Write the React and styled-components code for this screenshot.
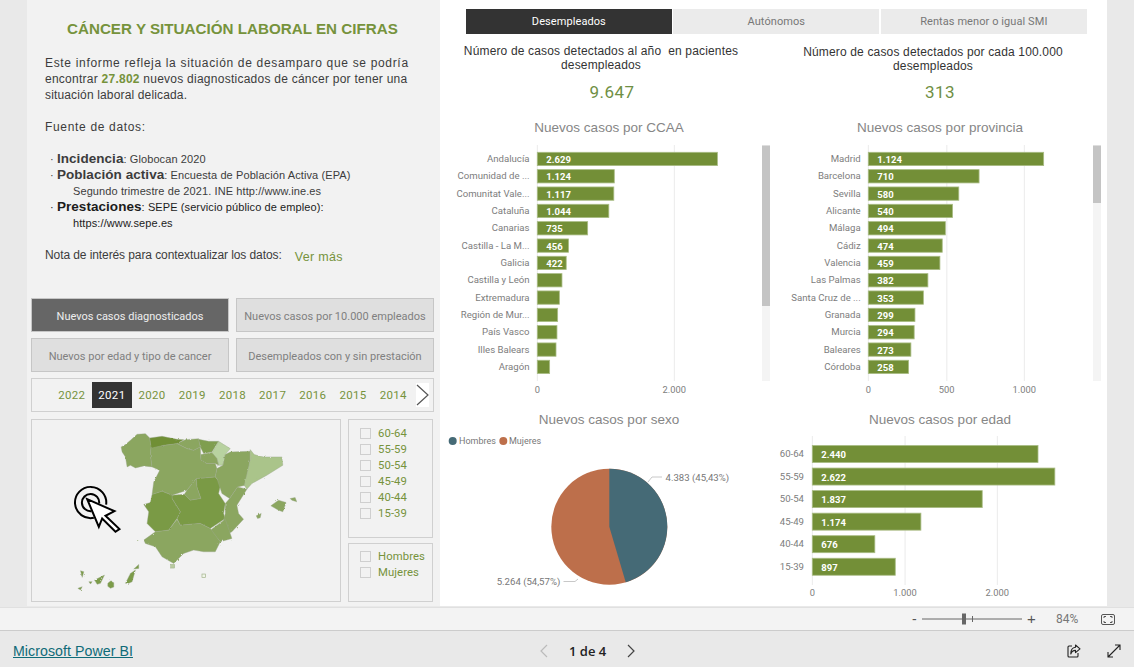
import React from 'react';
import styled, { createGlobalStyle } from 'styled-components';

const GREEN = '#76933c';
const Global = createGlobalStyle`
  html, body { margin: 0; padding: 0; width: 1134px; height: 667px; overflow: hidden; background: #e9e9e9; }
  * { box-sizing: border-box; }
  #root { font-family: "Liberation Sans", Arial, sans-serif; }
`;
const Page = styled.div`display: flex; flex-direction: column; width: 1134px; height: 667px;`;
const Main = styled.main`display: flex; height: 607px; padding: 0 27px;`;
const LeftPanel = styled.section`width: 413px; height: 606px; background: #f2f2f2; padding: 19px 0 0 4px;`;
const RightPanel = styled.section`width: 667px; height: 606px; background: #fff; padding-top: 9px;`;

const Title = styled.h1`margin: 0 0 0 36px; font-size: 15.2px; line-height: 20px; font-weight: 700; color: ${GREEN}; white-space: nowrap;`;
const Copy = styled.div`margin: 16px 0 0 14px; font-size: 12px; line-height: 16px; color: #3c3c3c; white-space: nowrap;`;
const Line = styled.div`letter-spacing: ${p => p.$sp}px; margin-bottom: ${p => p.$gap || 0}px;`;
const Green = styled.b`color: ${GREEN};`;
const Sources = styled.div`margin: 0 0 16px 5px; `;
const SourceLine = styled.div`font-size: 11px; letter-spacing: .1px; color: ${p => p.$dark ? '#1c1c1c' : '#3c3c3c'}; padding-left: ${p => p.$sub ? '23px' : '0'};`;
const SourceName = styled.b`font-size: 13.5px; letter-spacing: .05px;`;
const Note = styled.div`display: flex; align-items: baseline; font-size: 12px; letter-spacing: -.09px; color: #3c3c3c;`;
const More = styled.span`margin-left: 13px; font-size: 12.5px; letter-spacing: .35px; color: ${GREEN}; position: relative; top: 2px;`;

const Buttons = styled.div`display: grid; grid-template-columns: 198px 198px; grid-auto-rows: 34px; gap: 6px 7px; margin-top: 35px;`;
const NavButton = styled.div`
  display: flex; align-items: center; justify-content: center; border: 1px solid #c6c6c6;
  background: ${p => p.$active ? '#666' : '#dfdfdf'}; color: ${p => p.$active ? '#eee' : '#808080'};
  font-family: Roboto, sans-serif; font-size: 11px; white-space: nowrap; padding-top: 2px;
`;
const YearBar = styled.div`display: flex; align-items: center; width: 403px; height: 34px; margin-top: 6px; border: 1px solid #d0d0d0; padding-left: 19.6px; `;
const Year = styled.div`
  width: 40.2px; height: 26px; display: flex; align-items: center; justify-content: center;
  font-family: Roboto, sans-serif; font-size: 11.5px; letter-spacing: .3px;
  background: ${p => p.$active ? '#333' : 'transparent'}; color: ${p => p.$active ? '#fff' : GREEN};
`;
const NextYear = styled.svg`display: block; margin-left: 3px; background: #fff;`;
const FilterRow = styled.div`display: flex; gap: 7px; margin-top: 7px;`;
const MapBox = styled.div`width: 310px; height: 183px; border: 1px solid #d0d0d0;`;
const MapSvg = styled.svg`display: block; width: 308px; height: 181px;`;
const Slicers = styled.div`display: flex; flex-direction: column; gap: 5px; width: 85px;`;
const SlicerBox = styled.div`height: ${p => p.$h}px; border: 1px solid #d0d0d0; padding: ${p => p.$top}px 0 0 11px;`;
const Option = styled.div`display: flex; align-items: center; height: 16px; gap: 7px; font-family: Roboto, sans-serif; font-size: 11.3px; letter-spacing: .1px; color: ${GREEN};`;
const Check = styled.span`display: block; width: 11px; height: 11px; border: 1px solid #cfcfcf; `;

const Tabs = styled.div`display: grid; grid-template-columns: repeat(3, 205.7px); gap: 1.8px; margin-left: 26px; height: 24.5px;`;
const Tab = styled.div`
  display: flex; align-items: center; justify-content: center; font-family: Roboto, sans-serif; font-size: 11px; letter-spacing: .08px;
  background: ${p => p.$active ? '#333' : '#ebebeb'}; color: ${p => p.$active ? '#fff' : '#777'};
`;
const Columns = styled.div`display: grid; grid-template-columns: 330px 337px; margin-top: -.5px;`;
const Column = styled.div`display: flex; flex-direction: column;`;
const Kpi = styled.div`height: 71px; padding-top: ${p => p.$top}px;`;
const KpiCaption = styled.div`width: ${p => p.$w}px; height: 28px; text-align: center; font-size: 12px; line-height: 14px; letter-spacing: .16px; color: #333; white-space: pre-wrap;`;
const KpiValue = styled.div`width: ${p => p.$w}px; margin-top: ${p => p.$top}px; text-align: center; font-family: Roboto, sans-serif; font-size: 17px; line-height: 24px; font-weight: 400; letter-spacing: .5px; color: #6f8f44;`;
const ChartTitle = styled.h2`
  margin: ${p => p.$top}px 0 0; width: ${p => p.$w}px; height: 20px; text-align: center; font-size: 13.5px; line-height: 22px; font-weight: 400; color: #868686;
`;
const ChartSvg = styled.svg`
  display: block; flex: none;
  text { font-family: Roboto, sans-serif; }
`;

const ZoomBar = styled.div`display: flex; align-items: center; height: 23px; background: #f3f3f3; border-top: 1px solid #e0e0e0; padding-left: 912px;`;
const ZoomSign = styled.span`font-family: "Liberation Sans", sans-serif; font-size: ${p => p.$s}px; color: #555; width: ${p => p.$w}px; line-height: 20px; margin-left: ${p => p.$left || 0}px;`;
const ZoomPct = styled.span`font-family: Roboto, sans-serif; font-size: 12px; color: #777; margin-left: 18px; width: 45px;`;
const Footer = styled.footer`display: flex; align-items: center; height: 37px; background: #e9e9e9; border-top: 1px solid #ccc; padding: 3px 13px 0 13px;`;
const BrandLink = styled.a`width: 526px; font-size: 14.2px; color: #0f6b78; text-decoration: underline; letter-spacing: .05px; white-space: nowrap;`;
const Pager = styled.div`display: flex; align-items: center; gap: 20px; font-family: "Open Sans", sans-serif; font-size: 13px; font-weight: 600; color: #222;`;
const Actions = styled.div`display: flex; align-items: center; gap: 26px; margin-left: auto;`;

const ccaa = [['Andalucía', 2629, '2.629'], ['Comunidad de ...', 1124, '1.124'], ['Comunitat Vale...', 1117, '1.117'], ['Cataluña', 1044, '1.044'], ['Canarias', 735, '735'], ['Castilla - La M...', 456, '456'], ['Galicia', 422, '422'], ['Castilla y León', 360], ['Extremadura', 322], ['Región de Mur...', 297], ['País Vasco', 287], ['Illes Balears', 273], ['Aragón', 180]];
const prov = [['Madrid', 1124, '1.124'], ['Barcelona', 710, '710'], ['Sevilla', 580, '580'], ['Alicante', 540, '540'], ['Málaga', 494, '494'], ['Cádiz', 474, '474'], ['Valencia', 459, '459'], ['Las Palmas', 382, '382'], ['Santa Cruz de ...', 353, '353'], ['Granada', 299, '299'], ['Murcia', 294, '294'], ['Baleares', 273, '273'], ['Córdoba', 258, '258']];
const ages = [['60-64', 2440, '2.440'], ['55-59', 2622, '2.622'], ['50-54', 1837, '1.837'], ['45-49', 1174, '1.174'], ['40-44', 676, '676'], ['15-39', 897, '897']];

function Bars({ box, zero, scale, rows, top, step, barH, labelX, grid, ticks, tickY, labelSize = 9.6, thumb, scrollX }) {
  const [x, y, w, h] = box;
  return (
    <ChartSvg width={w} height={h} viewBox={`${x} ${y} ${w} ${h}`}>
      {ticks.map(t => <rect key={t[1]} x={t[0] - 0.5} y={grid[0]} width={1.2} height={grid[1] - grid[0]} fill="#eeeeee" />)}
      {rows.map((r, i) => {
        const by = top + i * step;
        return (
          <g key={r[0]}>
            <text x={labelX} y={by + barH / 2 + 3} textAnchor="end" fontSize={labelSize} fill="#7d7d7d">{r[0]}</text>
            <rect x={zero} y={by} width={r[1] * scale} height={barH} fill="#738f37" stroke="#a9bc84" strokeWidth=".8" />
            {r[2] && <text x={zero + 9} y={by + barH / 2 + 4} fontSize={9.5} fontWeight="700" fill="#fff">{r[2]}</text>}
          </g>
        );
      })}
      {ticks.map(t => <text key={t[1]} x={t[0]} y={tickY} textAnchor="middle" fontSize={9.3} fill="#7d7d7d">{t[1]}</text>)}
      {thumb && <rect x={scrollX} y={145.5} width={8} height={235.5} fill="#f4f4f4" />}
      {thumb && <rect x={scrollX} y={145.5} width={8} height={thumb - 145.5} fill="#c4c4c4" />}
    </ChartSvg>
  );
}

function Pie() {
  const cx = 609.3, cy = 527.7, r = 58;
  const a = 163.55 * Math.PI / 180;
  const ex = cx + r * Math.sin(a), ey = cy - r * Math.cos(a);
  return (
    <ChartSvg width={330} height={176} viewBox="440 430 330 176">
      <circle cx={452.7} cy={442} r={4} fill="#456a76" />
      <text x={459} y={445} fontSize={9} fill="#777">Hombres</text>
      <circle cx={503.3} cy={442} r={4} fill="#bd6f4b" />
      <text x={509} y={445} fontSize={9} fill="#777">Mujeres</text>
      <circle cx={cx} cy={cy} r={r} fill="#bd6f4b" />
      <path d={`M${cx} ${cy}L${cx} ${cy - r}A${r} ${r} 0 0 1 ${ex} ${ey}Z`} fill="#456a76" />
      <path d="M648 483L652 478H662M563.5 582.5H575L578 580" stroke="#c8c8c8" fill="none" />
      <text x={665.5} y={481.5} fontSize={9.6} fill="#777">4.383 (45,43%)</text>
      <text x={496.7} y={586} fontSize={9.6} fill="#777">5.264 (54,57%)</text>
    </ChartSvg>
  );
}

const regions = [
  ['#8ba660', '272,95 285,88 300,75 320,57 345,55 358,68 362,95 360,120 365,155 340,152 315,158 300,150 290,155 285,125 275,110'],
  ['#8ba660', '362,95 440,85 470,100 490,105 510,95 512,135 530,145 555,145 560,160 555,185 525,188 498,190 470,225 425,240 395,228 365,238 370,200 388,165 365,155 360,120'],
  ['#6f8f35', '358,68 395,63 440,72 460,73 440,85 400,90 365,98 362,95'],
  ['#8ba660', '440,85 465,73 505,70 510,95 490,105 470,100'],
  ['#7f9e50', '505,72 535,78 565,78 545,110 520,115 510,95'],
  ['#b8d2a0', '565,78 600,100 585,118 578,150 565,150 560,130 541,120'],
  ['#8ba660', '512,118 545,112 560,130 565,150 555,145 530,145 512,135'],
  ['#8ba660', '470,225 498,190 500,215 512,250 480,255 462,237'],
  ['#7a9a45', '498,190 525,188 555,185 572,205 565,235 585,265 580,295 585,310 540,340 510,325 450,330 440,310 450,290 425,250 425,240 462,237 480,255 512,250 500,215'],
  ['#8ba660', '600,110 660,108 660,135 645,210 622,215 598,250 575,235 560,190 555,185 560,160 578,150 585,118'],
  ['#aac48a', '660,103 672,118 700,125 755,125 758,150 710,180 665,205 650,222 642,210 660,135'],
  ['#8ba660', '622,215 650,222 620,270 625,295 640,312 605,350 595,355 580,315 585,295 585,265 598,250'],
  ['#8ba660', '585,312 605,370 570,380 540,345'],
  ['#7a9a45', '395,228 425,240 425,250 450,290 440,310 415,345 375,350 350,325 355,290 340,268 360,262 365,238'],
  ['#8ba660', '415,345 440,312 450,330 510,325 540,340 570,380 555,410 520,410 490,405 460,415 430,445 395,425 375,395 345,385 340,375 375,350'],
  ['#8ba660', '722,272 745,255 768,262 758,290 745,285'],
  ['#8ba660', '780,250 795,247 800,260 785,255'],
  ['#8ba660', '678,302 693,295 690,308 682,310'],
  ['#7c9c4a', '142,520 155,515 150,525'],
  ['#7c9c4a', '150,467 160,470 155,487'],
  ['#7c9c4a', '175,500 185,500 180,507'],
  ['#7c9c4a', '192,495 222,480 210,505 200,508'],
  ['#7c9c4a', '232,505 240,498 250,503 250,516 240,520 232,514'],
  ['#7c9c4a', '285,505 300,475 315,465 305,500 295,505'],
  ['#7c9c4a', '310,462 325,448 325,460'],
];

function SpainMap() {
  return (
    <MapSvg viewBox="5 14 924 544">
      <defs>
        <filter id="coast" x="0" y="0" width="1" height="1">
          <feTurbulence type="fractalNoise" baseFrequency=".12" numOctaves="2" seed="4" />
          <feDisplacementMap in="SourceGraphic" scale="7" />
        </filter>
      </defs>
      <g filter="url(#coast)">
        {regions.map(([c, p]) => <polygon key={p} points={p} fill={c} stroke="#9aa78a" strokeWidth="1.2" strokeLinejoin="round" />)}
      </g>
      <rect x="421" y="448" width="12" height="11" fill="#b9cba0" stroke="#9fb088" strokeWidth="1.5" />
      <rect x="515" y="477" width="11" height="10" fill="#f0f5e8" stroke="#9fb088" strokeWidth="2" />
      <circle cx="322" cy="376" r="1.5" fill="#8ba660" />
      <path d="M190 308A47 47 0 1 1 227 268" fill="none" stroke="#000" strokeWidth="6" />
      <path d="M183 288A26 26 0 1 1 206 265" fill="none" stroke="#000" strokeWidth="6" />
      <path d="M170 252L252 288L225 302L267 342L255 350L215 310L205 335Z" fill="#fff" stroke="#000" strokeWidth="6" strokeLinejoin="miter" />
    </MapSvg>
  );
}

export default function App() {
  const years = ['2022', '2021', '2020', '2019', '2018', '2017', '2016', '2015', '2014'];
  return (
    <Page>
      <Global />
      <Main>
        <LeftPanel>
          <Title>CÁNCER Y SITUACIÓN LABORAL EN CIFRAS</Title>
          <Copy>
            <Line $sp={.67}>Este informe refleja la situación de desamparo que se podría</Line>
            <Line $sp={.25}>encontrar <Green>27.802</Green> nuevos diagnosticados de cáncer por tener una</Line>
            <Line $sp={.15} $gap={16}>situación laboral delicada.</Line>
            <Line $sp={.67} $gap={16}>Fuente de datos:</Line>
            <Sources>
              <SourceLine>· <SourceName>Incidencia</SourceName>: Globocan 2020</SourceLine>
              <SourceLine>· <SourceName>Población activa</SourceName>: Encuesta de Población Activa (EPA)</SourceLine>
              <SourceLine $sub>Segundo trimestre de 2021. INE http://www.ine.es</SourceLine>
              <SourceLine $dark>· <SourceName>Prestaciones</SourceName>: SEPE (servicio público de empleo):</SourceLine>
              <SourceLine $sub $dark>https://www.sepe.es</SourceLine>
            </Sources>
            <Note>Nota de interés para contextualizar los datos:<More>Ver más</More></Note>
          </Copy>
          <Buttons>
            <NavButton $active>Nuevos casos diagnosticados</NavButton>
            <NavButton>Nuevos casos por 10.000 empleados</NavButton>
            <NavButton>Nuevos por edad y tipo de cancer</NavButton>
            <NavButton>Desempleados con y sin prestación</NavButton>
          </Buttons>
          <YearBar>
            {years.map(y => <Year key={y} $active={y === '2021'}>{y}</Year>)}
            <NextYear width="13" height="24" viewBox="0 0 13 24"><path d="M1 2L12 12L1 22" fill="none" stroke="#555" strokeWidth="1.2" /></NextYear>
          </YearBar>
          <FilterRow>
            <MapBox><SpainMap /></MapBox>
            <Slicers>
              <SlicerBox $h={119} $top={5}>
                {['60-64', '55-59', '50-54', '45-49', '40-44', '15-39'].map(a => <Option key={a}><Check />{a}</Option>)}
              </SlicerBox>
              <SlicerBox $h={59} $top={4}>
                <Option><Check />Hombres</Option>
                <Option><Check />Mujeres</Option>
              </SlicerBox>
            </Slicers>
          </FilterRow>
        </LeftPanel>
        <RightPanel>
          <Tabs>
            <Tab $active>Desempleados</Tab>
            <Tab>Autónomos</Tab>
            <Tab>Rentas menor o igual SMI</Tab>
          </Tabs>
          <Columns>
            <Column>
              <Kpi $top={11}>
                <KpiCaption $w={322}>{'Número de casos detectados al año  en pacientes\ndesempleados'}</KpiCaption>
                <KpiValue $w={344} $top={8}>9.647</KpiValue>
              </Kpi>
              <ChartTitle $w={338} $top={13}>Nuevos casos por CCAA</ChartTitle>
              <Bars box={[440, 137, 330, 272]} zero={537.3} scale={0.0685} rows={ccaa} top={152.3} step={17.33} barH={13.3} labelX={529.5}
                grid={[145, 381]} ticks={[[537.3, '0'], [674.3, '2.000']]} tickY={392.5} thumb={306} scrollX={762} />
              <ChartTitle $w={338} $top={0}>Nuevos casos por sexo</ChartTitle>
              <Pie />
            </Column>
            <Column>
              <Kpi $top={12}>
                <KpiCaption $w={326}>{'Número de casos detectados por cada 100.000\ndesempleados'}</KpiCaption>
                <KpiValue $w={340} $top={7}>313</KpiValue>
              </Kpi>
              <ChartTitle $w={340} $top={13}>Nuevos casos por provincia</ChartTitle>
              <Bars box={[770, 137, 337, 272]} zero={868.3} scale={0.156} rows={prov} top={152.3} step={17.33} barH={13.3} labelX={860.7}
                grid={[145, 381]} ticks={[[868.3, '0'], [946.7, '500'], [1024.3, '1.000']]} tickY={392.5} thumb={203} scrollX={1093} />
              <ChartTitle $w={340} $top={0}>Nuevos casos por edad</ChartTitle>
              <Bars box={[770, 430, 337, 176]} zero={812.3} scale={0.0925} rows={ages} top={446.5} step={22.55} barH={17} labelX={804}
                grid={[437, 586]} ticks={[[812.3, '0'], [905, '1.000'], [997.3, '2.000']]} tickY={597} />
            </Column>
          </Columns>
        </RightPanel>
      </Main>
      <ZoomBar>
        <ZoomSign $s={14} $w={10}>-</ZoomSign>
        <svg width="100" height="14" viewBox="0 0 100 14" aria-hidden="true">
          <path d="M0 7H100M50.5 4V10" stroke="#666" strokeWidth="1" />
          <rect x="40" y="1.5" width="4" height="11" fill="#666" />
        </svg>
        <ZoomSign $s={15} $w={11} $left={5}>+</ZoomSign>
        <ZoomPct>84%</ZoomPct>
        <svg width="14" height="11" viewBox="0 0 14 11" aria-hidden="true">
          <rect x=".5" y=".5" width="13" height="10" rx="1.5" fill="none" stroke="#555" />
          <path d="M3 4V2.5H5M9 2.5H11V4M11 7V8.5H9M5 8.5H3V7" fill="none" stroke="#555" />
        </svg>
      </ZoomBar>
      <Footer>
        <BrandLink>Microsoft Power BI</BrandLink>
        <Pager>
          <svg width="10" height="14" viewBox="0 0 10 14" aria-hidden="true"><path d="M8 1L2 7L8 13" fill="none" stroke="#bbb" strokeWidth="1.2" /></svg>
          <span>1 de 4</span>
          <svg width="10" height="14" viewBox="0 0 10 14" aria-hidden="true"><path d="M2 1L8 7L2 13" fill="none" stroke="#444" strokeWidth="1.2" /></svg>
        </Pager>
        <Actions>
          <svg width="14" height="14" viewBox="0 0 14 14" aria-hidden="true">
            <path d="M5 2H2Q1 2 1 3V12Q1 13 2 13H10Q11 13 11 12V9" fill="none" stroke="#222" strokeWidth="1.1" />
            <path d="M8.5 1L13 4.8L8.5 8.6V6.4Q5 6.4 3.8 10Q3.6 4 8.5 3.3Z" fill="none" stroke="#222" strokeWidth="1.1" strokeLinejoin="round" />
          </svg>
          <svg width="14" height="14" viewBox="0 0 14 14" aria-hidden="true">
            <path d="M1 13L13 1M8 1H13V6M1 8V13H6" fill="none" stroke="#222" strokeWidth="1.1" />
          </svg>
        </Actions>
      </Footer>
    </Page>
  );
}
